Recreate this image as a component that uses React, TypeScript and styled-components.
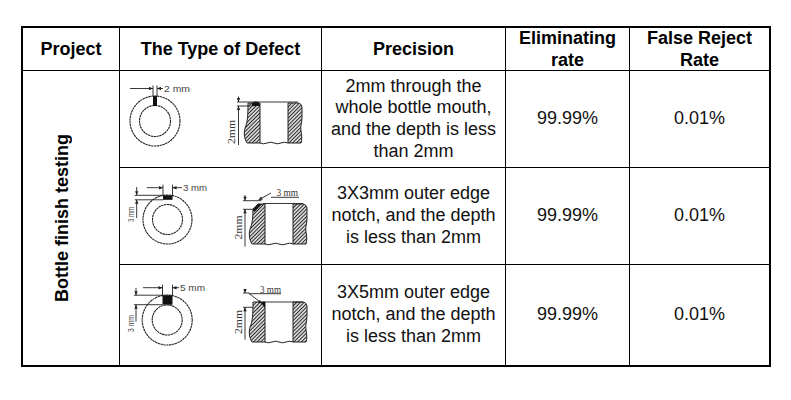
import React from 'react';
import styled, { createGlobalStyle } from 'styled-components';

const INK = '#222';
const LABEL = '#444';

const GlobalStyle = createGlobalStyle`
  html, body {
    margin: 0;
    padding: 0;
    background: #fff;
  }

  body {
    font-family: 'Liberation Sans', Arial, sans-serif;
    color: #000;
  }
`;

const Page = styled.div`
  width: 791px;
  height: 400px;
  padding: 26px 0 0 21px;
  box-sizing: border-box;
`;

const Table = styled.div`
  display: grid;
  grid-template-columns: 96px 201px 183px 123px 139px;
  grid-template-rows: 42px 96px 96px 100px;
  gap: 1px;
  width: 750px;
  padding: 2px;
  box-sizing: border-box;
  background: #000;
`;

const HeadCell = styled.div`
  display: flex;
  align-items: center;
  justify-content: center;
  text-align: center;
  background: #fff;
  font-size: 18px;
  font-weight: 700;
  line-height: 22px;
`;

const BodyCell = styled.div`
  display: flex;
  align-items: center;
  justify-content: center;
  text-align: center;
  background: #fff;
  font-size: 18px;
  line-height: 21.7px;
  color: #111;
`;

const ProjectCell = styled(HeadCell)`
  grid-row: span 3;
  padding-right: 18px;
`;

const Vertical = styled.span`
  writing-mode: vertical-rl;
  transform: rotate(180deg);
  white-space: nowrap;
`;

const FigureCell = styled.div`
  display: flex;
  background: #fff;
`;

const Figure = styled.svg`
  display: block;
`;

const Stroke = styled.line`
  stroke: ${INK};
  stroke-width: 0.9;
`;

const Outline = styled.path`
  stroke: ${INK};
  stroke-width: 1;
`;

const Label = styled.text<{ $serif?: boolean }>`
  font-family: ${(p) => (p.$serif ? "'Liberation Serif', 'Times New Roman', serif" : "'Liberation Sans', Arial, sans-serif")};
  font-size: ${(p) => (p.$serif ? '10.5px' : '9px')};
  fill: ${(p) => (p.$serif ? '#333' : LABEL)};
`;

interface ArrowProps {
  x: number;
  y: number;
  angle: number;
}

// tip sits on (x, y), body trails behind the given angle
function Arrow ({ angle, x, y }: ArrowProps) {
  return (
    <polygon
      fill={INK}
      points='0,0 -4,-1.7 -4,1.7'
      transform={`translate(${x} ${y}) rotate(${angle})`}
    />
  );
}

interface Box {
  x: number;
  y: number;
  w: number;
  h: number;
}

interface Depth {
  x: number;
  top: number;
  bottom: number;
  label: string;
  labelY: number;
  labelLength: number;
}

interface RingProps {
  cx: number;
  cy: number;
  outer: number;
  inner: number;
  notch: Box;
  dimY: number;
  dimStart: number;
  label: string;
  labelX: number;
  labelLength: number;
  depth?: Depth;
}

function Ring ({ cx, cy, depth, dimStart, dimY, inner, label, labelLength, labelX, notch, outer }: RingProps) {
  const right = notch.x + notch.w;
  const bottom = notch.y + notch.h;

  return (
    <g>
      <circle cx={cx} cy={cy} fill='none' r={outer} stroke={INK} strokeDasharray='2.4 0.5' strokeWidth={1.1} />
      <circle cx={cx} cy={cy} fill='none' r={inner} stroke={INK} strokeDasharray='2.4 0.5' strokeWidth={1.1} />
      <rect fill='#111' height={notch.h} width={notch.w} x={notch.x} y={notch.y} />
      <Stroke x1={notch.x} x2={notch.x} y1={dimY - 3} y2={notch.y} />
      <Stroke x1={right} x2={right} y1={dimY - 3} y2={notch.y} />
      <Stroke x1={dimStart} x2={notch.x} y1={dimY} y2={dimY} />
      <Arrow angle={0} x={notch.x} y={dimY} />
      <Stroke x1={right} x2={labelX - 1} y1={dimY} y2={dimY} />
      <Arrow angle={180} x={right} y={dimY} />
      <Label lengthAdjust='spacingAndGlyphs' textLength={labelLength} x={labelX} y={dimY + 3.2}>{label}</Label>
      {depth && (
        <g>
          <Stroke x1={depth.x - 2} x2={notch.x} y1={notch.y} y2={notch.y} />
          <Stroke x1={depth.x - 2} x2={notch.x} y1={bottom} y2={bottom} />
          <Stroke x1={depth.x} x2={depth.x} y1={depth.top} y2={notch.y} />
          <Arrow angle={90} x={depth.x} y={notch.y} />
          <Stroke x1={depth.x} x2={depth.x} y1={bottom} y2={depth.bottom} />
          <Arrow angle={-90} x={depth.x} y={bottom} />
          <Label
            fontSize={7.5}
            lengthAdjust='spacingAndGlyphs'
            textAnchor='middle'
            textLength={depth.labelLength}
            transform={`rotate(-90 ${depth.x - 2.5} ${depth.labelY})`}
            x={depth.x - 2.5}
            y={depth.labelY}
          >
            {depth.label}
          </Label>
        </g>
      )}
    </g>
  );
}

type NotchKind = 'blob' | 'chamfer' | 'inner';

interface BottleProps {
  id: string;
  ox: number;
  oy: number;
  notch: NotchKind;
  depth: { x: number; top: number; upper: number; lower: number; bottom: number; labelY: number };
  children?: React.ReactNode;
}

function notchShape (kind: NotchKind) {
  if (kind === 'blob') {
    return <path d='M131.5,35 Q131.5,30.5 135.8,30.5 Q140,30.5 140,35 Z' fill='#111' />;
  }

  if (kind === 'chamfer') {
    return <polygon fill='#111' points='128,37.5 133.5,32 137,32 129.5,40' />;
  }

  return <polygon fill='#111' points='135.5,32 140,32 140,38' />;
}

// walls are drawn in row-one coordinates and shifted per row
function Bottle ({ children, depth, id, notch, ox, oy }: BottleProps) {
  const cut = notch === 'chamfer' ? 5 : 0;
  const hatch = `hatch-${id}`;

  return (
    <g>
      <defs>
        <pattern height='2.6' id={hatch} patternTransform='rotate(45)' patternUnits='userSpaceOnUse' width='2.6'>
          <line stroke={INK} strokeWidth='1.2' x1='1.3' x2='1.3' y1='0' y2='2.6' />
        </pattern>
      </defs>
      <g transform={`translate(${ox} ${oy})`}>
        <Outline
          d={`M128,${32 + cut} L${128 + cut},32 L140,32 L140,72 L127,72 C124,67 123.5,61 125.5,56 C127.5,51 128,44 128,${32 + cut} Z`}
          fill={`url(#${hatch})`}
        />
        <Outline
          d='M168,32 L177,32 Q182,32 182,37 L182,46 C182,52 180,55 181,60 C182,65 182,69 181,72 L168,72 Z'
          fill={`url(#${hatch})`}
        />
        <Outline d='M140,72 q3.5,1.6 7,0 t7,0 t7,0 t7,0' fill='none' />
        {notchShape(notch)}
      </g>
      <Stroke x1={depth.x} x2={depth.x} y1={depth.top} y2={depth.upper} />
      <Arrow angle={90} x={depth.x} y={depth.upper} />
      <Stroke x1={depth.x} x2={depth.x} y1={depth.lower} y2={depth.bottom} />
      <Arrow angle={-90} x={depth.x} y={depth.lower} />
      <Label
        $serif
        lengthAdjust='spacingAndGlyphs'
        textAnchor='middle'
        textLength={24}
        transform={`rotate(-90 ${depth.x - 3.5} ${depth.labelY})`}
        x={depth.x - 3.5}
        y={depth.labelY}
      >
        2mm
      </Label>
      {children}
    </g>
  );
}

interface DefectRow {
  id: string;
  height: number;
  precision: string[];
  ring: RingProps;
  bottle: BottleProps;
}

const rows: DefectRow[] = [
  {
    bottle: {
      children: (
        <>
          <Stroke x1={117} x2={178} y1={31} y2={31} />
          <Stroke x1={117} x2={131} y1={35} y2={35} />
        </>
      ),
      depth: { bottom: 74, labelY: 61, lower: 35, top: 25.5, upper: 31, x: 118.5 },
      id: 'through',
      notch: 'blob',
      ox: 0,
      oy: 0
    },
    height: 96,
    id: 'through',
    precision: ['2mm through the', 'whole bottle mouth,', 'and the depth is less', 'than 2mm'],
    ring: { cx: 35, cy: 50, dimStart: 10, dimY: 17.5, inner: 15.5, label: '2 mm', labelLength: 26, labelX: 44, notch: { h: 10, w: 4, x: 33, y: 25 }, outer: 25 }
  },
  {
    bottle: {
      children: (
        <>
          <Stroke x1={143} x2={183} y1={35.5} y2={35.5} />
          <Stroke x1={123} x2={141.5} y1={32.7} y2={32.7} />
          <Stroke x1={123} x2={133} y1={41.3} y2={41.3} />
          <Stroke x1={138.5} x2={151} y1={32} y2={25} />
          <Arrow angle={150.7} x={138.5} y={32} />
          <Stroke x1={151} x2={179} y1={29.3} y2={29.3} />
          <Label $serif lengthAdjust='spacingAndGlyphs' textLength={21.5} x={156.5} y={28.3}>3 mm</Label>
        </>
      ),
      depth: { bottom: 78.7, labelY: 59.5, lower: 41.3, top: 27, upper: 32.7, x: 125 },
      id: 'edge3',
      notch: 'chamfer',
      ox: 5,
      oy: 4
    },
    height: 96,
    id: 'edge3',
    precision: ['3X3mm outer edge', 'notch, and the depth', 'is less than 2mm'],
    ring: {
      cx: 47.5,
      cy: 51.5,
      depth: { bottom: 50, label: '3 mm', labelLength: 15, labelY: 46.5, top: 19, x: 16.7 },
      dimStart: 26.7,
      dimY: 19.7,
      inner: 15,
      label: '3 mm',
      labelLength: 24,
      labelX: 63,
      notch: { h: 4.5, w: 9.5, x: 43, y: 27.3 },
      outer: 24.5
    }
  },
  {
    bottle: {
      children: (
        <>
          <Stroke x1={143} x2={183} y1={37} y2={37} />
          <Stroke x1={123} x2={129} y1={28} y2={28} />
          <Stroke x1={123} x2={133} y1={42.3} y2={42.3} />
          <Stroke x1={128.5} x2={142} y1={28} y2={38.5} />
          <Arrow angle={37.9} x={142} y={38.5} />
          <Stroke x1={129} x2={161} y1={28.7} y2={28.7} />
          <Label $serif lengthAdjust='spacingAndGlyphs' textLength={21} x={140} y={27.5}>3 mm</Label>
        </>
      ),
      depth: { bottom: 74.7, labelY: 57, lower: 42.3, top: 24.7, upper: 28, x: 125 },
      id: 'edge5',
      notch: 'inner',
      ox: 5,
      oy: 5
    },
    height: 100,
    id: 'edge5',
    precision: ['3X5mm outer edge', 'notch, and the depth', 'is less than 2mm'],
    ring: {
      cx: 47.2,
      cy: 55,
      depth: { bottom: 56.7, label: '3 mm', labelLength: 17, labelY: 58.5, top: 23, x: 16 },
      dimStart: 23,
      dimY: 22.7,
      inner: 15,
      label: '5 mm',
      labelLength: 25,
      labelX: 60,
      notch: { h: 9.5, w: 10, x: 42.5, y: 30.2 },
      outer: 25
    }
  }
];

function Lines ({ lines }: { lines: string[] }) {
  return (
    <div>
      {lines.map((line, index) => (
        <React.Fragment key={line}>
          {index > 0 && <br />}
          {line}
        </React.Fragment>
      ))}
    </div>
  );
}

export default function App (): React.ReactElement {
  return (
    <Page>
      <GlobalStyle />
      <Table>
        <HeadCell>Project</HeadCell>
        <HeadCell>The Type of Defect</HeadCell>
        <HeadCell>Precision</HeadCell>
        <HeadCell><Lines lines={['Eliminating', 'rate']} /></HeadCell>
        <HeadCell><Lines lines={['False Reject', 'Rate']} /></HeadCell>
        <ProjectCell>
          <Vertical>Bottle finish testing</Vertical>
        </ProjectCell>
        {rows.map((row) => (
          <React.Fragment key={row.id}>
            <FigureCell>
              <Figure height={row.height} viewBox={`0 0 201 ${row.height}`} width={201}>
                <Ring {...row.ring} />
                <Bottle {...row.bottle} />
              </Figure>
            </FigureCell>
            <BodyCell><Lines lines={row.precision} /></BodyCell>
            <BodyCell>99.99%</BodyCell>
            <BodyCell>0.01%</BodyCell>
          </React.Fragment>
        ))}
      </Table>
    </Page>
  );
}
